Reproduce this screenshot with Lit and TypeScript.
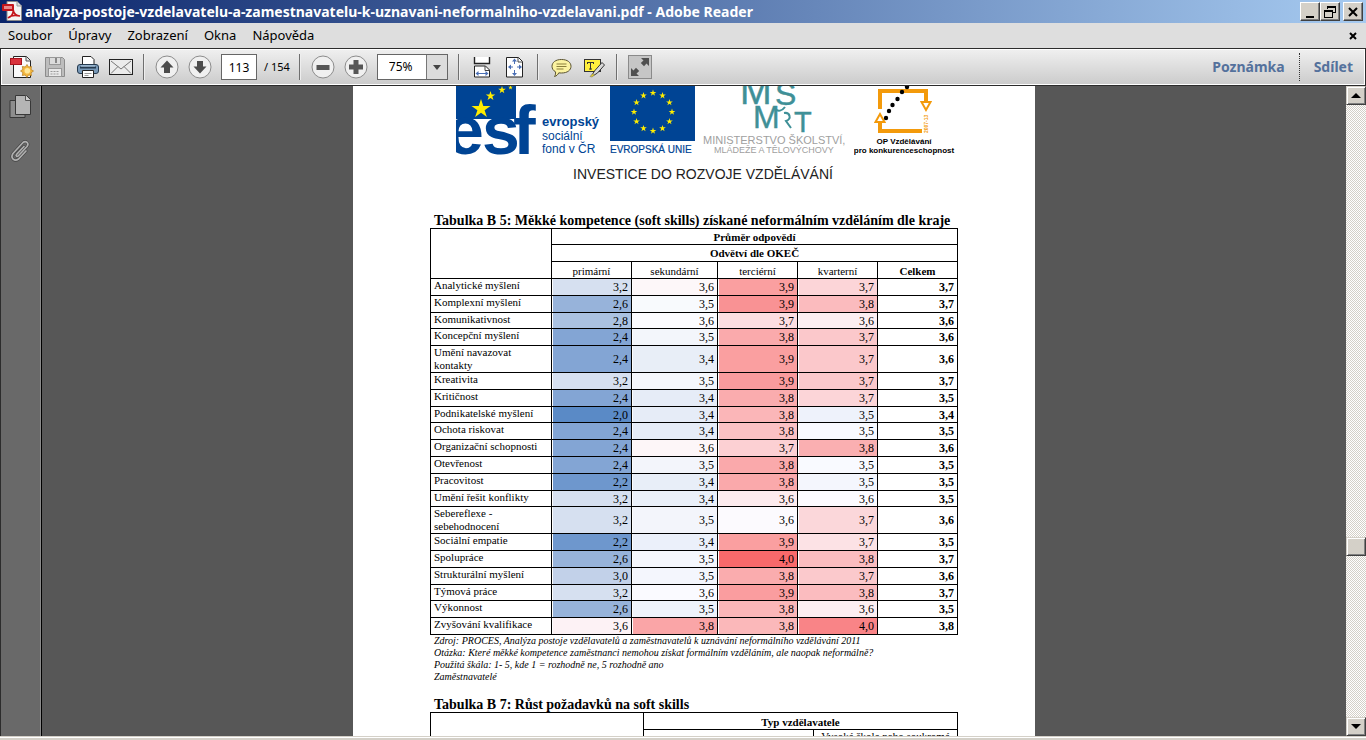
import { LitElement, html, svg, css } from "lit";
import { customElement, property } from "lit/decorators.js";

type Cell = [value: string, fill: string];

interface Row {
  label: string;
  cells: Cell[];
  total: string;
  size?: string;
}

const ROWS: Row[] = [
  { label: "Analytické myšlení", cells: [["3,2", "#d6e0f0"], ["3,6", "#fdf7f9"], ["3,9", "#fa9fa0"], ["3,7", "#fcd5d8"]], total: "3,7" },
  { label: "Komplexní myšlení", cells: [["2,6", "#97b3da"], ["3,5", "#f8fafd"], ["3,9", "#f99294"], ["3,8", "#fbbbbe"]], total: "3,7" },
  { label: "Komunikativnost", cells: [["2,8", "#abc2e1"], ["3,6", "#fcfcff"], ["3,7", "#fcdee1"], ["3,6", "#fceef1"]], total: "3,6", size: "short" },
  { label: "Koncepční myšlení", cells: [["2,4", "#83a5d4"], ["3,5", "#f3f6fb"], ["3,8", "#faaaac"], ["3,7", "#fbc8cb"]], total: "3,6" },
  { label: "Umění navazovat kontakty", cells: [["2,4", "#83a5d4"], ["3,4", "#e8eef7"], ["3,9", "#fa9fa0"], ["3,7", "#fbc8cb"]], total: "3,6", size: "double" },
  { label: "Kreativita", cells: [["3,2", "#d6e0f0"], ["3,5", "#f5f7fc"], ["3,9", "#fa9b9d"], ["3,7", "#fbc8cb"]], total: "3,7" },
  { label: "Kritičnost", cells: [["2,4", "#83a5d4"], ["3,4", "#e6ecf7"], ["3,8", "#faacae"], ["3,7", "#fcd5d8"]], total: "3,5" },
  { label: "Podnikatelské myšlení", cells: [["2,0", "#5a8ac6"], ["3,4", "#e6ecf7"], ["3,8", "#fbb6b8"], ["3,5", "#eef2fb"]], total: "3,4", size: "short" },
  { label: "Ochota riskovat", cells: [["2,4", "#83a5d4"], ["3,4", "#e6ecf7"], ["3,8", "#fbc1c4"], ["3,5", "#f9faff"]], total: "3,5" },
  { label: "Organizační schopnosti", cells: [["2,4", "#83a5d4"], ["3,6", "#fdf6f8"], ["3,7", "#fcd0d3"], ["3,8", "#faafb1"]], total: "3,6" },
  { label: "Otevřenost", cells: [["2,4", "#83a5d4"], ["3,5", "#f3f5fb"], ["3,8", "#faa9ab"], ["3,5", "#f9faff"]], total: "3,5" },
  { label: "Pracovitost", cells: [["2,2", "#6e97cd"], ["3,4", "#e8eef8"], ["3,8", "#faa9ab"], ["3,5", "#f4f6fd"]], total: "3,5" },
  { label: "Umění řešit konflikty", cells: [["3,2", "#d6e0f0"], ["3,4", "#eaf0f9"], ["3,6", "#fdebee"], ["3,6", "#fcfbff"]], total: "3,5", size: "short" },
  { label: "Sebereflexe - sebehodnocení", cells: [["3,2", "#d6e0f0"], ["3,5", "#f3f5fb"], ["3,6", "#fcfafe"], ["3,7", "#fbd7da"]], total: "3,6", size: "double" },
  { label: "Sociální empatie", cells: [["2,2", "#6e97cd"], ["3,4", "#ebf0fa"], ["3,9", "#fa9fa0"], ["3,7", "#fce2e5"]], total: "3,5" },
  { label: "Spolupráce", cells: [["2,6", "#97b3da"], ["3,5", "#f5f7fd"], ["4,0", "#f8696b"], ["3,8", "#fbbcbf"]], total: "3,7" },
  { label: "Strukturální myšlení", cells: [["3,0", "#c2d1e9"], ["3,5", "#f4f6fd"], ["3,8", "#faacae"], ["3,7", "#fbc9cc"]], total: "3,6" },
  { label: "Týmová práce", cells: [["3,2", "#d6e0f0"], ["3,6", "#fafaff"], ["3,9", "#fa9d9f"], ["3,8", "#fbbcbf"]], total: "3,7", size: "short" },
  { label: "Výkonnost", cells: [["2,6", "#97b3da"], ["3,5", "#eef3fb"], ["3,8", "#fbb6b8"], ["3,6", "#fceef1"]], total: "3,5" },
  { label: "Zvyšování kvalifikace", cells: [["3,6", "#fdf2f5"], ["3,8", "#faa5a7"], ["3,8", "#fbb8ba"], ["4,0", "#f98487"]], total: "3,8" },
];

const STAR = "M0 -1L.23 -.31L.95 -.31L.36 .12L.59 .81L0 .38L-.59 .81L-.36 .12L-.95 -.31L-.23 -.31Z";

const star = (x: number, y: number, r: number) =>
  svg`<path d=${STAR} fill="#ffed00" transform="translate(${x} ${y}) scale(${r})" />`;

@customElement("window-title")
class WindowTitle extends LitElement {
  @property() name = "";

  static styles = css`
    :host { display: flex; align-items: center; height: 23px; padding: 0 3px 0 2px;
      background: linear-gradient(90deg, #0a246a, #a6caf0); color: #fff; }
    .logo { flex: none; margin-right: 3px; }
    .name { flex: 1; margin: 0; font: bold 14px/22px "Noto Sans", "Open Sans", sans-serif; white-space: nowrap; overflow: hidden; }
    .btn { width: 20px; height: 19px; padding: 0; display: grid; place-items: center; border: 1px solid;
      border-color: #fff #404040 #404040 #fff; box-shadow: inset -1px -1px #808080; background: #d4d0c8; border-radius: 0; }
    .close { margin-left: 3px; }
  `;

  render() {
    return html`
      <svg class="logo" width="20" height="22" viewBox="0 0 20 22">
        <path d="M5 .5h10l4.500 4.500v14.500h-14.500z" fill="#f4f4f4" stroke="#8a8a8a" />
        <path d="M15 .5v4.500h4.500" fill="#ddd" stroke="#999" />
        <rect x="0" y="3" width="12" height="7" rx="1" fill="#c4151c" />
        <path d="M2 5h8v3h-8z" fill="#e8888b" />
        <path d="M6 17c3-1 5-4 5.500-8M11 9c1 4 3 6 7 6M6 17c3-3 8-3 12-2" fill="none" stroke="#c4151c" stroke-width="1.700" />
      </svg>
      <h1 class="name">${this.name}</h1>
      <button class="btn" aria-label="Minimalizovat">
        <svg width="14" height="14"><path d="M3 11h8v2h-8z" /></svg>
      </button>
      <button class="btn" aria-label="Obnovit">
        <svg width="14" height="14"><path d="M4 1h9v7h-3v-1h2v-4h-7v1h-1zM1 5h9v8h-9zM2 7v5h7v-5z" fill-rule="evenodd" /></svg>
      </button>
      <button class="btn close" aria-label="Zavřít">
        <svg width="14" height="14"><path d="M3 3L11 11M11 3L3 11" stroke="#000" stroke-width="2" /></svg>
      </button>`;
  }
}

@customElement("menu-bar")
class MenuBar extends LitElement {
  static styles = css`
    :host { display: flex; align-items: center; justify-content: space-between; height: 25px; padding: 0 6px 0 8px; background: #dedede; }
    .items { display: flex; gap: 16px; }
    .item, .close { padding: 0; border: 0; background: none; color: #000; font: 13px/22px "Noto Sans", "Open Sans", sans-serif; }
    .items { padding-bottom: 2px; }
    .close { display: grid; place-items: center; width: 14px; height: 24px; }
  `;

  render() {
    const items = ["Soubor", "Úpravy", "Zobrazení", "Okna", "Nápověda"];
    return html`
      <nav class="items">${items.map((t) => html`<button class="item">${t}</button>`)}</nav>
      <button class="close" aria-label="Zavřít dokument">
        <svg width="8" height="8"><path d="M1 1L7 7M7 1L1 7" stroke="#000" stroke-width="2" /></svg>
      </button>`;
  }
}

@customElement("tool-bar")
class ToolBar extends LitElement {
  static styles = css`
    :host { display: flex; align-items: center; justify-content: space-between; box-sizing: border-box; height: 38px;
      border: 1px solid #2c2c2c; padding: 0 12px 0 9px;
      background: linear-gradient(#f0f0f0, #cbcbcb); box-shadow: inset 0 0 0 1px #fff;
      font: 12px/16px "Noto Sans", "Open Sans", sans-serif; color: #000; }
    .tools, .links { display: flex; align-items: center; }
    .group { display: flex; align-items: center; gap: 9px; }
    .btn { padding: 0; border: 0; width: 24px; height: 24px; background: none; }
    .btn svg { display: block; }
    .sep { width: 1px; height: 26px; margin: 0 10px; background: #6f6f6f; border-right: 1px solid #eee; }
    .page { box-sizing: border-box; width: 36px; height: 26px; border: 1px solid #666; padding: 0; margin: 0;
      background: #fff; font: inherit; text-align: center; color: #000; border-radius: 0; }
    .total { white-space: nowrap; margin: 0 -1px 0 -2px; font-size: 11px; }
    .zoom { position: relative; display: block; }
    .select { appearance: none; box-sizing: border-box; width: 71px; height: 26px; padding: 0 0 0 11px; margin: 0; border: 1px solid #666;
      border-radius: 0; background: #fff; font: inherit; color: #000; }
    .arrow { position: absolute; right: 1px; top: 1px; pointer-events: none; }
    .link { padding: 0; border: 0; background: none; font: bold 14px/20px "Noto Sans", "Open Sans", sans-serif; color: #54719c; }
    .dots { height: 28px; margin: 0 14px; border-left: 1px dotted #333; }
  `;

  private button(label: string, art: unknown) {
    return html`<button class="btn" aria-label=${label}><svg width="24" height="24" viewBox="0 0 24 24">${art}</svg></button>`;
  }

  private round(label: string, art: unknown) {
    return this.button(label, svg`<circle cx="12" cy="12" r="11" fill="#f0f0f0" stroke="#8c8c8c" />${art}`);
  }

  render() {
    return html`
      <div class="tools">
        <div class="group">
          ${this.button("Vytvořit PDF", svg`
            <path d="M3.500 1.500h13l4 4v17h-17z" fill="#fafafa" stroke="#222" />
            <path d="M16 1.500v4.500h4.500" fill="#e4e4e4" stroke="#555" />
            <rect x=".5" y="3.500" width="11" height="6" fill="#d9323c" stroke="#a8141d" />
            <path d="M17 9.500l1.500 2.500 3-.5-.5 3 2.500 1.500-2.500 1.800.5 2.700-3-.5-1.500 2.500-1.800-2.500-2.900.5.6-2.900-2.400-1.600 2.400-1.700-.6-2.800 3 .5z" fill="#f4b840" stroke="#b57b1b" stroke-width=".7" />
            <circle cx="17.300" cy="15.800" r="2.800" fill="#ffe89a" />`)}
          ${this.button("Uložit", svg`
            <path d="M2.500 2.500h17l2 2v17h-19z" fill="#bdbdbd" stroke="#8c8c8c" />
            <rect x="6.500" y="2.500" width="11" height="7" fill="#dcdcdc" stroke="#989898" />
            <path d="M13 3v5" stroke="#888" stroke-width="2" />
            <rect x="5.500" y="13.500" width="13" height="8" fill="#e8e8e8" stroke="#989898" />
            <path d="M7.500 16.500h9M7.500 19h9" stroke="#999" stroke-dasharray="2 1" />`)}
          ${this.button("Tisk", svg`
            <path d="M6.500 10v-8.500h8.500l3 3v5.500" fill="#fff" stroke="#222" />
            <rect x="1.500" y="9.500" width="21" height="9" rx="2.500" fill="#7899b8" stroke="#24394e" />
            <path d="M4 12.500h16" stroke="#24394e" stroke-width="2" />
            <path d="M5 11h14" stroke="#b9d0e4" />
            <path d="M6.500 15.500h11v7h-11z" fill="#fff" stroke="#222" />
            <path d="M8.500 18.500h7M8.500 20.500h4" stroke="#999" />`)}
          ${this.button("E-mail", svg`
            <rect x=".5" y="4.500" width="23" height="15" fill="#ececec" stroke="#222" />
            <path d="M2 6l10 8 10-8M2 18.500l7-7M22 18.500l-7-7" fill="none" stroke="#777" />`)}
        </div>
        <div class="sep"></div>
        <div class="group">
          ${this.round("Předchozí stránka", svg`<path d="M12 5.500l6.500 7h-3.500v5.500h-6v-5.500h-3.500z" fill="#4c4c4c" />`)}
          ${this.round("Další stránka", svg`<path d="M12 18.500l6.500-7h-3.500v-5.500h-6v5.500h-3.500z" fill="#4c4c4c" />`)}
          <input class="page" aria-label="Číslo stránky" value="113" />
          <span class="total">/ 154</span>
        </div>
        <div class="sep"></div>
        <div class="group">
          ${this.round("Zmenšit", svg`<path d="M5.500 10h13v5h-13z" fill="#565656" />`)}
          ${this.round("Zvětšit", svg`<path d="M9.500 5h5v4.500h4.500v5h-4.500v4.500h-5v-4.500h-4.500v-5h4.500z" fill="#565656" />`)}
          <label class="zoom">
            <select class="select" aria-label="Přiblížení"><option>75%</option></select>
            <svg class="arrow" width="21" height="24"><path d="M0 0h21v24h-21z" fill="#dcdcdc" /><path d="M0 0h1v24h-1z" fill="#777" /><path d="M7 10h8l-4 5z" fill="#444" /></svg>
          </label>
        </div>
        <div class="sep"></div>
        <div class="group">
          ${this.button("Šířka stránky", svg`
            <path d="M4.500 2v6.500h15v-6.500" fill="#fff" stroke="#222" stroke-width="1.400" />
            <path d="M4.500 22v-11h11l4 4v7z" fill="#fff" stroke="#222" /><path d="M15 11v4.500h4.500" fill="none" stroke="#444" />
            <path d="M6 18.500h12" stroke="#4a6fb5" /><path d="M5.500 18.500l3-2.500v5zM18.500 18.500l-3-2.500v5z" fill="#4a6fb5" />`)}
          ${this.button("Celá stránka", svg`
            <path d="M3.500 2.500h12l4 4v15.500h-16z" fill="#fff" stroke="#222" /><path d="M15 2.500v4.500h4.500" fill="none" stroke="#444" />
            <path d="M11.500 4v5M11.500 15v5M6 12h4M14 12h4" stroke="#4a6fb5" />
            <path d="M11.500 3.500l2.500 3h-5zM11.500 21l2.500-3h-5zM5 12l3-2.500v5zM19 12l-3-2.500v5z" fill="#4a6fb5" />`)}
        </div>
        <div class="sep"></div>
        <div class="group">
          ${this.button("Komentář", svg`
            <path d="M12.500 4.500c6 0 9.500 3 9.500 6.800s-3.500 6.700-9.500 6.700c-1 0-2 0-2.700-.2-1 2-2.300 3.200-4.300 3.700 1-1.500 1.300-3 1-4.700-2.300-1.200-3.500-3.200-3.500-5.500 0-3.800 3.500-6.800 9.500-6.800z" fill="#fcf3a0" stroke="#5a5330" />
            <path d="M7.500 9h10M7.500 11.500h10M7.500 14h7" stroke="#8b7f3a" />`)}
          ${this.button("Zvýraznit", svg`
            <rect x="2.500" y="4.500" width="16" height="12" fill="#ffef3e" stroke="#333" />
            <path d="M5.500 7.500h6M8.500 7.500v7M7 14h3M5.500 7v2M11.500 7v2" stroke="#333" />
            <path d="M10 20l2.500-4 7.500-8.500 2.500 2.500-7 8-4 2.500z" fill="#d9d9d9" stroke="#333" />
            <path d="M8 21.500l3-3 1.500 1.500-2.500 2z" fill="#e8cf27" stroke="#776" stroke-width=".6" />`)}
        </div>
        <div class="sep"></div>
        ${this.button("Režim čtení", svg`
          <rect x=".5" y=".5" width="23" height="23" fill="#c6c6c6" stroke="#8a8a8a" />
          <path d="M21 3v8l-2.500-2.500-2.500 2.700-3.200-3.200 2.700-2.500-2.500-2.500zM3 21v-8l2.500 2.500 2.500-2.700 3.200 3.200-2.700 2.500 2.500 2.500z" fill="#505050" />`)}
      </div>
      <div class="links">
        <button class="link">Poznámka</button>
        <div class="dots"></div>
        <button class="link">Sdílet</button>
      </div>`;
  }
}

@customElement("logo-strip")
class LogoStrip extends LitElement {
  static styles = css`
    :host { display: flex; align-items: flex-start; height: 72px; padding-left: 103px; }
    .art { display: block; flex: none; font-family: "Liberation Sans", Arial, sans-serif; }
    .esf { margin-right: 6px; }
    .eu { margin-right: 6px; }
  `;

  render() {
    const ring = Array.from({ length: 12 }, (_, i) => {
      const a = (i * Math.PI) / 6;
      return star(43 + 19 * Math.sin(a), 26 - 19 * Math.cos(a), 3.5);
    });
    const dots = [[53, 1], [48, 6], [43.5, 13], [38.5, 19], [35, 25], [32, 32]];
    return html`
      <svg class="art esf" width="148" height="72" viewBox="0 0 148 72">
        <path d="M0 0h60v33h-60z" fill="#004494" />
        <text x="-10 26 57" y="68" font-size="68" font-weight="bold" fill="#004494">esf</text>
        ${star(25, 23, 10)}${star(34.5, 10, 5)}${star(46, 4, 4)}${star(54.5, 1.5, 2.5)}
        <text x="86" y="40" font-size="13" font-weight="bold" fill="#004494">evropský</text>
        <text x="86" y="54" font-size="12" fill="#004494">sociální</text>
        <text x="86" y="67" font-size="12" fill="#004494">fond v ČR</text>
      </svg>
      <svg class="art eu" width="87" height="72" viewBox="0 0 87 72">
        <path d="M0 0h85v55h-85z" fill="#004494" />
        ${ring}
        <text x="0" y="67" font-size="10" fill="#004494" stroke="#004494" stroke-width=".2">EVROPSKÁ UNIE</text>
      </svg>
      <svg class="art" width="151" height="72" viewBox="0 0 151 72">
        <g fill="#3f9097" stroke="#3f9097" stroke-width=".4">
          <text x="37" y="18" font-size="38">M</text>
          <text x="72" y="19" font-size="32">Š</text>
          <text x="50" y="42" font-size="32">M</text>
          <text x="91" y="46" font-size="29">T</text>
        </g>
        <path d="M72 23c3 3 7 2 10-2M81 27c6-1 8 6 2 8l5 7" fill="none" stroke="#3f9097" stroke-width="2" />
        <text x="0" y="58" font-size="11" fill="#a0a0a0">MINISTERSTVO ŠKOLSTVÍ,</text>
        <text x="11" y="67" font-size="9" fill="#a0a0a0">MLÁDEŽE A TĚLOVÝCHOVY</text>
      </svg>
      <svg class="art" width="104" height="72" viewBox="0 0 104 72">
        <path d="M26 23v-18h46v12M26 37v8h42" fill="none" stroke="#f39a0b" stroke-width="4" />
        <path d="M67.500 16h9l-4.500 8zM21.500 36h9l-4.500-8z" fill="#fff" stroke="#f39a0b" stroke-width="2" />
        ${dots.map(([x, y]) => svg`<circle cx=${x} cy=${y} r="2.200" />`)}
        <text transform="translate(74 47) rotate(-90)" font-size="5" font-weight="bold" fill="#f39a0b">2007-13</text>
        <text x="50" y="58" font-size="8" font-weight="bold" text-anchor="middle">OP Vzdělávání</text>
        <text x="50" y="67" font-size="8" font-weight="bold" text-anchor="middle">pro konkurenceschopnost</text>
      </svg>`;
  }
}

@customElement("pdf-page")
class PdfPage extends LitElement {
  static styles = css`
    :host { display: block; box-sizing: border-box; width: 682px; background: #fff; color: #000;
      font: 11px/13px "Liberation Serif", "Times New Roman", serif; }
    .motto { margin: 8px 0 0; padding-left: 18px; text-align: center; font: 14px/16px "Liberation Sans", Arial, sans-serif; color: #222; }
    .body { padding: 0 77px; }
    .title { margin: 0; padding: 2px 0 0 4px; font-size: 14px; line-height: 14px; font-weight: bold; white-space: nowrap; }
    .first { margin-top: 30px; }
    .second { margin-top: 13px; }
    .grid { border-collapse: separate; border-spacing: 0; table-layout: fixed; width: 528px;
      border: solid #000; border-width: 1px 0 0 1px; }
    .grid th, .grid td { box-sizing: border-box; padding: 0 3px; border: solid #000; border-width: 0 1px 1px 0; font-weight: normal; }
    .label-col { width: 121px; }
    .wide-col { width: 86px; }
    .col { width: 80px; }
    .grid .strong { font-weight: bold; }
    .row { height: 17px; }
    .short { height: 16px; }
    .double { height: 27px; }
    .grid .head { padding-top: 2px; line-height: 13px; }
    .grid .label { text-align: left; vertical-align: top; }
    .grid .sub { line-height: 12px; padding-top: 2px; }
    .grid .top { vertical-align: top; white-space: nowrap; }
    .grid .num { text-align: right; font-size: 12px; padding-top: 1px; vertical-align: middle; box-shadow: inset 1px 0 #fff; }
    .notes { margin: 0; padding-left: 4px; font-size: 10px; line-height: 12px; font-style: italic; color: #000; }
    .kind-col { width: 213px; }
    .left-col { width: 170px; }
  `;

  render() {
    return html`
      <logo-strip></logo-strip>
      <p class="motto">INVESTICE DO ROZVOJE VZDĚLÁVÁNÍ</p>
      <div class="body">
        <h2 class="title first" id="t5">Tabulka B 5: Měkké kompetence (soft skills) získané neformálním vzděláním dle kraje</h2>
        <table class="grid" aria-labelledby="t5">
          <colgroup>
            <col class="label-col" /><col class="col" /><col class="wide-col" /><col class="col" /><col class="col" /><col class="col" />
          </colgroup>
          <thead>
            <tr class="short"><td rowspan="3"></td><th class="head strong" colspan="5">Průměr odpovědí</th></tr>
            <tr class="row"><th class="strong" colspan="5">Odvětví dle OKEČ</th></tr>
            <tr class="row">
              <th class="sub">primární</th><th class="sub">sekundární</th><th class="sub">terciérní</th><th class="sub">kvarterní</th>
              <th class="head strong">Celkem</th>
            </tr>
          </thead>
          <tbody>
            ${ROWS.map((r) => html`
              <tr class=${r.size ?? "row"}>
                <th class="label" scope="row">${r.label}</th>
                ${r.cells.map(([v, fill]) => html`<td class="num" style="background:${fill}">${v}</td>`)}
                <td class="num strong">${r.total}</td>
              </tr>`)}
          </tbody>
        </table>
        <p class="notes">
          Zdroj: PROCES, Analýza postoje vzdělavatelů a zaměstnavatelů k uznávání neformálního vzdělávání 2011<br />
          Otázka: Které měkké kompetence zaměstnanci nemohou získat formálním vzděláním, ale naopak neformálně?<br />
          Použitá škála: 1- 5, kde 1 = rozhodně ne, 5 rozhodně ano<br />
          Zaměstnavatelé
        </p>
        <h2 class="title second" id="t7">Tabulka B 7: Růst požadavků na soft skills</h2>
        <table class="grid" aria-labelledby="t7">
          <colgroup><col class="kind-col" /><col class="left-col" /><col /></colgroup>
          <thead>
            <tr class="row"><td rowspan="2"></td><th class="head strong" colspan="2">Typ vzdělavatele</th></tr>
            <tr class="double"><th></th><th class="top">Vysoká škola nebo soukromá</th></tr>
          </thead>
        </table>
      </div>`;
  }
}

@customElement("app-root")
class AppRoot extends LitElement {
  static styles = css`
    :host { display: grid; grid-template-rows: auto auto auto minmax(0, 1fr) 4px; height: 100vh; overflow: hidden; background: #dedede; }
    .work { display: flex; min-height: 0; background: #575757; }
    .panel { box-sizing: border-box; flex: none; width: 42px; display: flex; flex-direction: column; gap: 18px; align-items: center;
      padding: 8px 3px 0 0; border: solid; border-width: 0 1px 0 1px; border-color: #2c2c2c #000 #2c2c2c #2c2c2c;
      background: #696969; box-shadow: inset -1px 0 #8a8a8a; }
    .panel-btn { padding: 0; border: 0; background: none; height: 26px; }
    .panel-btn svg { display: block; }
    .doc { flex: 1; min-width: 0; display: flex; justify-content: center; align-items: flex-start; overflow: hidden; }
    .sheet { flex: none; }
    .scroll { flex: none; width: 20px; display: flex; flex-direction: column;
      background: repeating-conic-gradient(#fff 0 25%, #d4d0c8 0 50%) 0 0 / 2px 2px; }
    .knob { box-sizing: border-box; flex: none; width: 20px; height: 19px; padding: 0; display: grid; place-items: center; border: 1px solid;
      border-color: #d4d0c8 #404040 #404040 #d4d0c8; background: #d4d0c8; box-shadow: inset 1px 1px #fff, inset -1px -1px #808080; }
    .before { flex: 432; }
    .after { flex: 161; }
    .edge { background: #d4d0c8; border-top: 1px solid #d4d0c8; box-shadow: inset 0 1px #fff; }
  `;

  render() {
    return html`
      <window-title name="analyza-postoje-vzdelavatelu-a-zamestnavatelu-k-uznavani-neformalniho-vzdelavani.pdf - Adobe Reader"></window-title>
      <menu-bar></menu-bar>
      <tool-bar></tool-bar>
      <main class="work">
        <aside class="panel">
          <button class="panel-btn" aria-label="Miniatury stránek">
            <svg width="22" height="26" viewBox="0 0 22 26">
              <path d="M1 6.500h15v17h-15z" fill="#8d8d8d" stroke="#383838" />
              <path d="M6.500 1.500h11l4 4v15h-15z" fill="#b5b5b5" stroke="#383838" />
              <path d="M16.500 1.500v5h5" fill="#d0d0d0" stroke="#555" />
            </svg>
          </button>
          <button class="panel-btn" aria-label="Přílohy">
            <svg width="22" height="26" viewBox="0 0 22 26" fill="none" stroke-linecap="round">
              <path d="M15 8.500l-7.500 8c-1 1.200.4 2.700 1.700 1.500l8.800-9.500c2.500-3-1-6.500-4-4l-10 11c-3 4.500 1.500 8.500 5.500 5.500l7.500-8" stroke="#444" stroke-width="3" />
              <path d="M15 8.500l-7.500 8c-1 1.200.4 2.700 1.700 1.500l8.800-9.500c2.500-3-1-6.500-4-4l-10 11c-3 4.500 1.500 8.500 5.500 5.500l7.500-8" stroke="#b0b0b0" stroke-width="1.700" />
            </svg>
          </button>
        </aside>
        <div class="doc"><pdf-page class="sheet"></pdf-page></div>
        <div class="scroll">
          <button class="knob" aria-label="Nahoru"><svg width="10" height="6"><path d="M5 0l5 5h-10z" /></svg></button>
          <div class="before"></div>
          <div class="knob"></div>
          <div class="after"></div>
          <button class="knob" aria-label="Dolů"><svg width="10" height="6"><path d="M5 5l5-5h-10z" /></svg></button>
        </div>
      </main>
      <div class="edge"></div>`;
  }
}
